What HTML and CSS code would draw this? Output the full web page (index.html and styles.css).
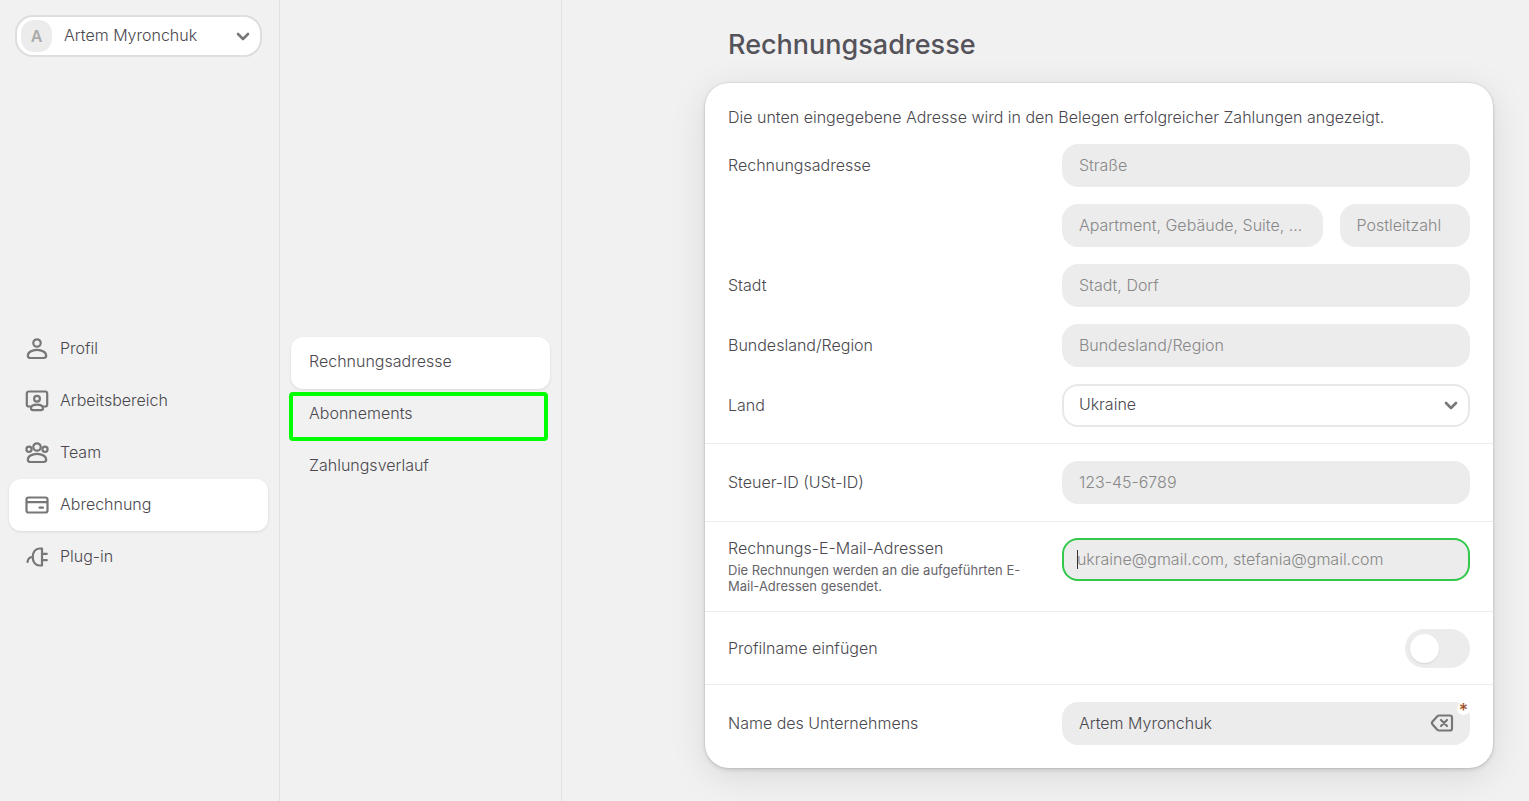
FILE: index.html
```
<!DOCTYPE html>
<html lang="de">
<head>
    <meta charset="UTF-8">
    <meta name="viewport" content="width=device-width, initial-scale=1.0">
    <title>Rechnungsadresse</title>
    <link rel="stylesheet" href="styles.css">
</head>
<body>
    <div class="app">
        <aside class="sidebar">
            <button type="button" class="account">
                <span class="avatar">A</span>
                <span class="account-name">Artem Myronchuk</span>
                <svg class="chevron" viewBox="0 0 14 10"><path d="M2 3l5 5 5-5"/></svg>
            </button>
            <nav class="menu">
                <a href="#profil" class="menu-item">
                    <svg class="icon" viewBox="0 0 24 24"><circle cx="12" cy="6" r="3.7"/><path d="M12 12.8c5 0 9.2 2.6 9.2 6 0 1.6-1.2 2.2-2.8 2.2H5.6c-1.6 0-2.8-.6-2.8-2.2 0-3.4 4.2-6 9.2-6z"/></svg>
                    <span>Profil</span>
                </a>
                <a href="#arbeitsbereich" class="menu-item">
                    <svg class="icon" viewBox="0 0 24 24"><path d="M5.5 17.500H3.800a2 2 0 0 1-2-2V4.500a2 2 0 0 1 2-2h16.400a2 2 0 0 1 2 2v11a2 2 0 0 1-2 2h-1.700"/><circle cx="12" cy="9.800" r="2.900"/><path d="M12 15.600c3.600 0 6 1.500 6 3.600 0 1.200-.8 1.900-2 1.900H8c-1.200 0-2-.7-2-1.900 0-2.100 2.400-3.600 6-3.600z"/></svg>
                    <span>Arbeitsbereich</span>
                </a>
                <a href="#team" class="menu-item">
                    <svg class="icon" viewBox="0 0 24 24"><circle cx="12" cy="6" r="3.7"/><circle cx="4" cy="8.2" r="2.6"/><circle cx="20" cy="8.2" r="2.6"/><path d="M12 12.8c5 0 9.2 2.6 9.2 6 0 1.6-1.2 2.2-2.8 2.2H5.6c-1.6 0-2.8-.6-2.8-2.2 0-3.4 4.2-6 9.2-6z"/></svg>
                    <span>Team</span>
                </a>
                <a href="#abrechnung" class="menu-item active">
                    <svg class="icon" viewBox="0 0 24 24"><rect x="1.5" y="4.5" width="21" height="15" rx="2"/><path d="M2 9.2h20M14.5 14.6h3.5"/></svg>
                    <span>Abrechnung</span>
                </a>
                <a href="#plugin" class="menu-item">
                    <svg class="icon" viewBox="0 0 24 24"><path d="M17 3.500v17h-2.500c-4 0-6.800-3.600-6.800-8.500s2.800-8.500 6.800-8.500zM17 8.800h4.800M17 15.200h4.800M7.500 12c-3 0-4.500 1.800-5 5"/></svg>
                    <span>Plug-in</span>
                </a>
            </nav>
        </aside>

        <nav class="submenu">
            <a href="#rechnungsadresse" class="submenu-item active">Rechnungsadresse</a>
            <a href="#abonnements" class="submenu-item marked">Abonnements</a>
            <a href="#zahlungsverlauf" class="submenu-item">Zahlungsverlauf</a>
        </nav>

        <main class="content">
            <h1>Rechnungsadresse</h1>
            <form class="card">
                <section class="section address">
                    <p class="intro">Die unten eingegebene Adresse wird in den Belegen erfolgreicher Zahlungen angezeigt.</p>
                    <div class="row">
                        <label for="street">Rechnungsadresse</label>
                        <input type="text" id="street" class="field" placeholder="Straße">
                    </div>
                    <div class="row">
                        <span></span>
                        <div class="field-pair">
                            <input type="text" class="field" aria-label="Apartment" placeholder="Apartment, Gebäude, Suite, ...">
                            <input type="text" class="field" aria-label="Postleitzahl" placeholder="Postleitzahl">
                        </div>
                    </div>
                    <div class="row">
                        <label for="city">Stadt</label>
                        <input type="text" id="city" class="field" placeholder="Stadt, Dorf">
                    </div>
                    <div class="row">
                        <label for="region">Bundesland/Region</label>
                        <input type="text" id="region" class="field" placeholder="Bundesland/Region">
                    </div>
                    <div class="row">
                        <label for="country">Land</label>
                        <div class="control">
                            <select id="country" class="field">
                                <option>Ukraine</option>
                            </select>
                            <svg class="chevron" viewBox="0 0 14 10"><path d="M2 3l5 5 5-5"/></svg>
                        </div>
                    </div>
                </section>
                <section class="section">
                    <div class="row">
                        <label for="taxId">Steuer-ID (USt-ID)</label>
                        <input type="text" id="taxId" class="field" placeholder="123-45-6789">
                    </div>
                </section>
                <section class="section emails">
                    <div class="row row-top">
                        <div class="label-group">
                            <label for="emails">Rechnungs-E-Mail-Adressen</label>
                            <p class="hint">Die Rechnungen werden an die aufgeführten E-Mail-Adressen gesendet.</p>
                        </div>
                        <div class="control">
                            <input type="text" id="emails" class="field focused" placeholder="ukraine@gmail.com, stefania@gmail.com">
                            <span class="caret"></span>
                        </div>
                    </div>
                </section>
                <section class="section switch">
                    <div class="row">
                        <label for="profileName">Profilname einfügen</label>
                        <input type="checkbox" id="profileName" class="toggle">
                    </div>
                </section>
                <section class="section">
                    <div class="row">
                        <label for="company">Name des Unternehmens</label>
                        <div class="control">
                            <input type="text" id="company" class="field" value="Artem Myronchuk">
                            <button type="button" class="clear" aria-label="Löschen">
                                <svg class="icon" viewBox="0 0 24 24"><path d="M9 4.500h11a2 2 0 0 1 2 2v11a2 2 0 0 1-2 2H9c-.7 0-1.200-.3-1.700-.8L2.600 13.500c-.8-.9-.8-2.100 0-3L7.300 5.300c.5-.5 1-.8 1.700-.8z"/><path d="M11 9l6 6M17 9l-6 6"/></svg>
                            </button>
                            <span class="required">*</span>
                        </div>
                    </div>
                </section>
            </form>
        </main>
    </div>
</body>
</html>
```
FILE: styles.css
```
* {
    box-sizing: border-box;
}
body {
    margin: 0;
    background-color: #f1f1f1;
    color: #4a484e;
    font-family: Inter, "Liberation Sans", sans-serif;
    font-size: 16px;
    font-weight: 300;
    line-height: 20px;
}
h1, p {
    margin: 0;
}
a {
    color: inherit;
    text-decoration: none;
}
input, select, button {
    font: inherit;
    color: inherit;
}
svg {
    fill: none;
    stroke: #777;
    stroke-width: 2.2;
    stroke-linecap: round;
    stroke-linejoin: round;
}
.app {
    display: flex;
    min-height: 100vh;
}

/* left columns */
.sidebar, .submenu {
    flex-shrink: 0;
    border-right: 1px solid #e0e0e0;
}
.sidebar {
    width: 280px;
    padding: 15px 11px 0 9px;
}
.account {
    display: flex;
    align-items: center;
    width: 247px;
    height: 42px;
    margin-left: 6px;
    padding: 0 10px 0 4px;
    background: white;
    border: 2px solid #dedede;
    border-radius: 18px;
    text-align: left;
    cursor: pointer;
}
.avatar {
    width: 31px;
    height: 32px;
    margin-right: 12px;
    border-radius: 13px;
    background: #ececec;
    color: #aaa;
    font-weight: 600;
    line-height: 32px;
    text-align: center;
}
.account-name {
    flex: 1;
    padding-bottom: 2px;
}
.chevron {
    width: 14px;
    height: 10px;
    stroke-width: 2.6;
}
.icon {
    width: 24px;
    height: 24px;
}
.menu {
    margin-top: 266px;
}
.menu-item, .submenu-item {
    display: flex;
    align-items: center;
    height: 52px;
    border-radius: 12px;
}
.menu-item {
    gap: 11px;
    padding: 0 16px;
}
.menu-item span {
    padding-bottom: 2px;
}
.submenu {
    width: 282px;
    padding: 337px 11px 0;
}
.submenu-item {
    position: relative;
    padding: 0 18px 4px;
}
.active {
    background: white;
    box-shadow: 0 1px 3px rgba(0,0,0,0.1);
}
.marked::after {
    content: "";
    position: absolute;
    inset: 3px 2px 0 -2px;
    border: 4px solid #00ff00;
    border-radius: 4px;
}

/* form */
.content {
    flex: 1;
    padding: 28px 36px 32px 143px;
}
h1 {
    margin: 0 23px 21px;
    color: #55535a;
    font-size: 27px;
    font-weight: 500;
    line-height: 34px;
}
.card {
    background: white;
    border-radius: 24px;
    box-shadow: 0 0 1px 1px rgba(0,0,0,0.06), 0 2px 4px rgba(0,0,0,0.12), 0 8px 36px rgba(0,0,0,0.1);
}
.section {
    padding: 17px 23px;
    border-bottom: 1px solid #ececec;
}
.section:last-child {
    padding-bottom: 23px;
    border-bottom: none;
}
.address {
    display: grid;
    gap: 17px;
    padding: 24px 23px 16px;
}
.emails {
    padding: 16px 23px 17px;
}
.switch {
    padding-bottom: 16px;
}
.row {
    display: grid;
    grid-template-columns: 9fr 11fr;
    align-items: center;
}
.row-top {
    align-items: start;
}
.label-group {
    padding-right: 30px;
}
.hint {
    margin-top: 2px;
    color: #66646a;
    font-size: 13px;
    font-weight: 400;
    line-height: 16px;
}
label {
    display: block;
    padding-bottom: 2px;
}
.field {
    width: 100%;
    height: 43px;
    padding: 0 17px 2px;
    background: #ececec;
    border: none;
    border-radius: 16px;
    outline: none;
}
.field::placeholder {
    color: #888;
    opacity: 1;
}
.field-pair {
    display: grid;
    grid-template-columns: 2fr 1fr;
    gap: 17px;
}
.control {
    position: relative;
}
select.field {
    display: block;
    padding: 0 15px 3px;
    background: white;
    border: 2px solid #e8e8e8;
    appearance: none;
}
.control .chevron {
    position: absolute;
    top: 16px;
    right: 12px;
    pointer-events: none;
}
.field.focused {
    padding: 0 13px 2px;
    border: 2px solid #32c84a;
}
.caret {
    position: absolute;
    top: 12px;
    left: 15px;
    width: 1px;
    height: 19px;
    background: #333;
}
.toggle {
    justify-self: end;
    width: 65px;
    height: 39px;
    margin: 0;
    padding: 5px;
    background: #ececec;
    border-radius: 20px;
    appearance: none;
    cursor: pointer;
}
.toggle::before {
    content: "";
    display: block;
    width: 29px;
    height: 29px;
    border-radius: 50%;
    background: white;
    box-shadow: 0 1px 2px rgba(0,0,0,0.1);
}
.toggle:checked::before {
    margin-left: auto;
}
.clear {
    position: absolute;
    top: 9px;
    right: 16px;
    height: 24px;
    padding: 0;
    background: none;
    border: none;
    cursor: pointer;
}
.required {
    position: absolute;
    top: 0;
    right: 0;
    width: 13px;
    height: 13px;
    border-radius: 50%;
    background: white;
    color: #a0522d;
    font-size: 18px;
    font-weight: 500;
    line-height: 18px;
    text-align: center;
}
```
